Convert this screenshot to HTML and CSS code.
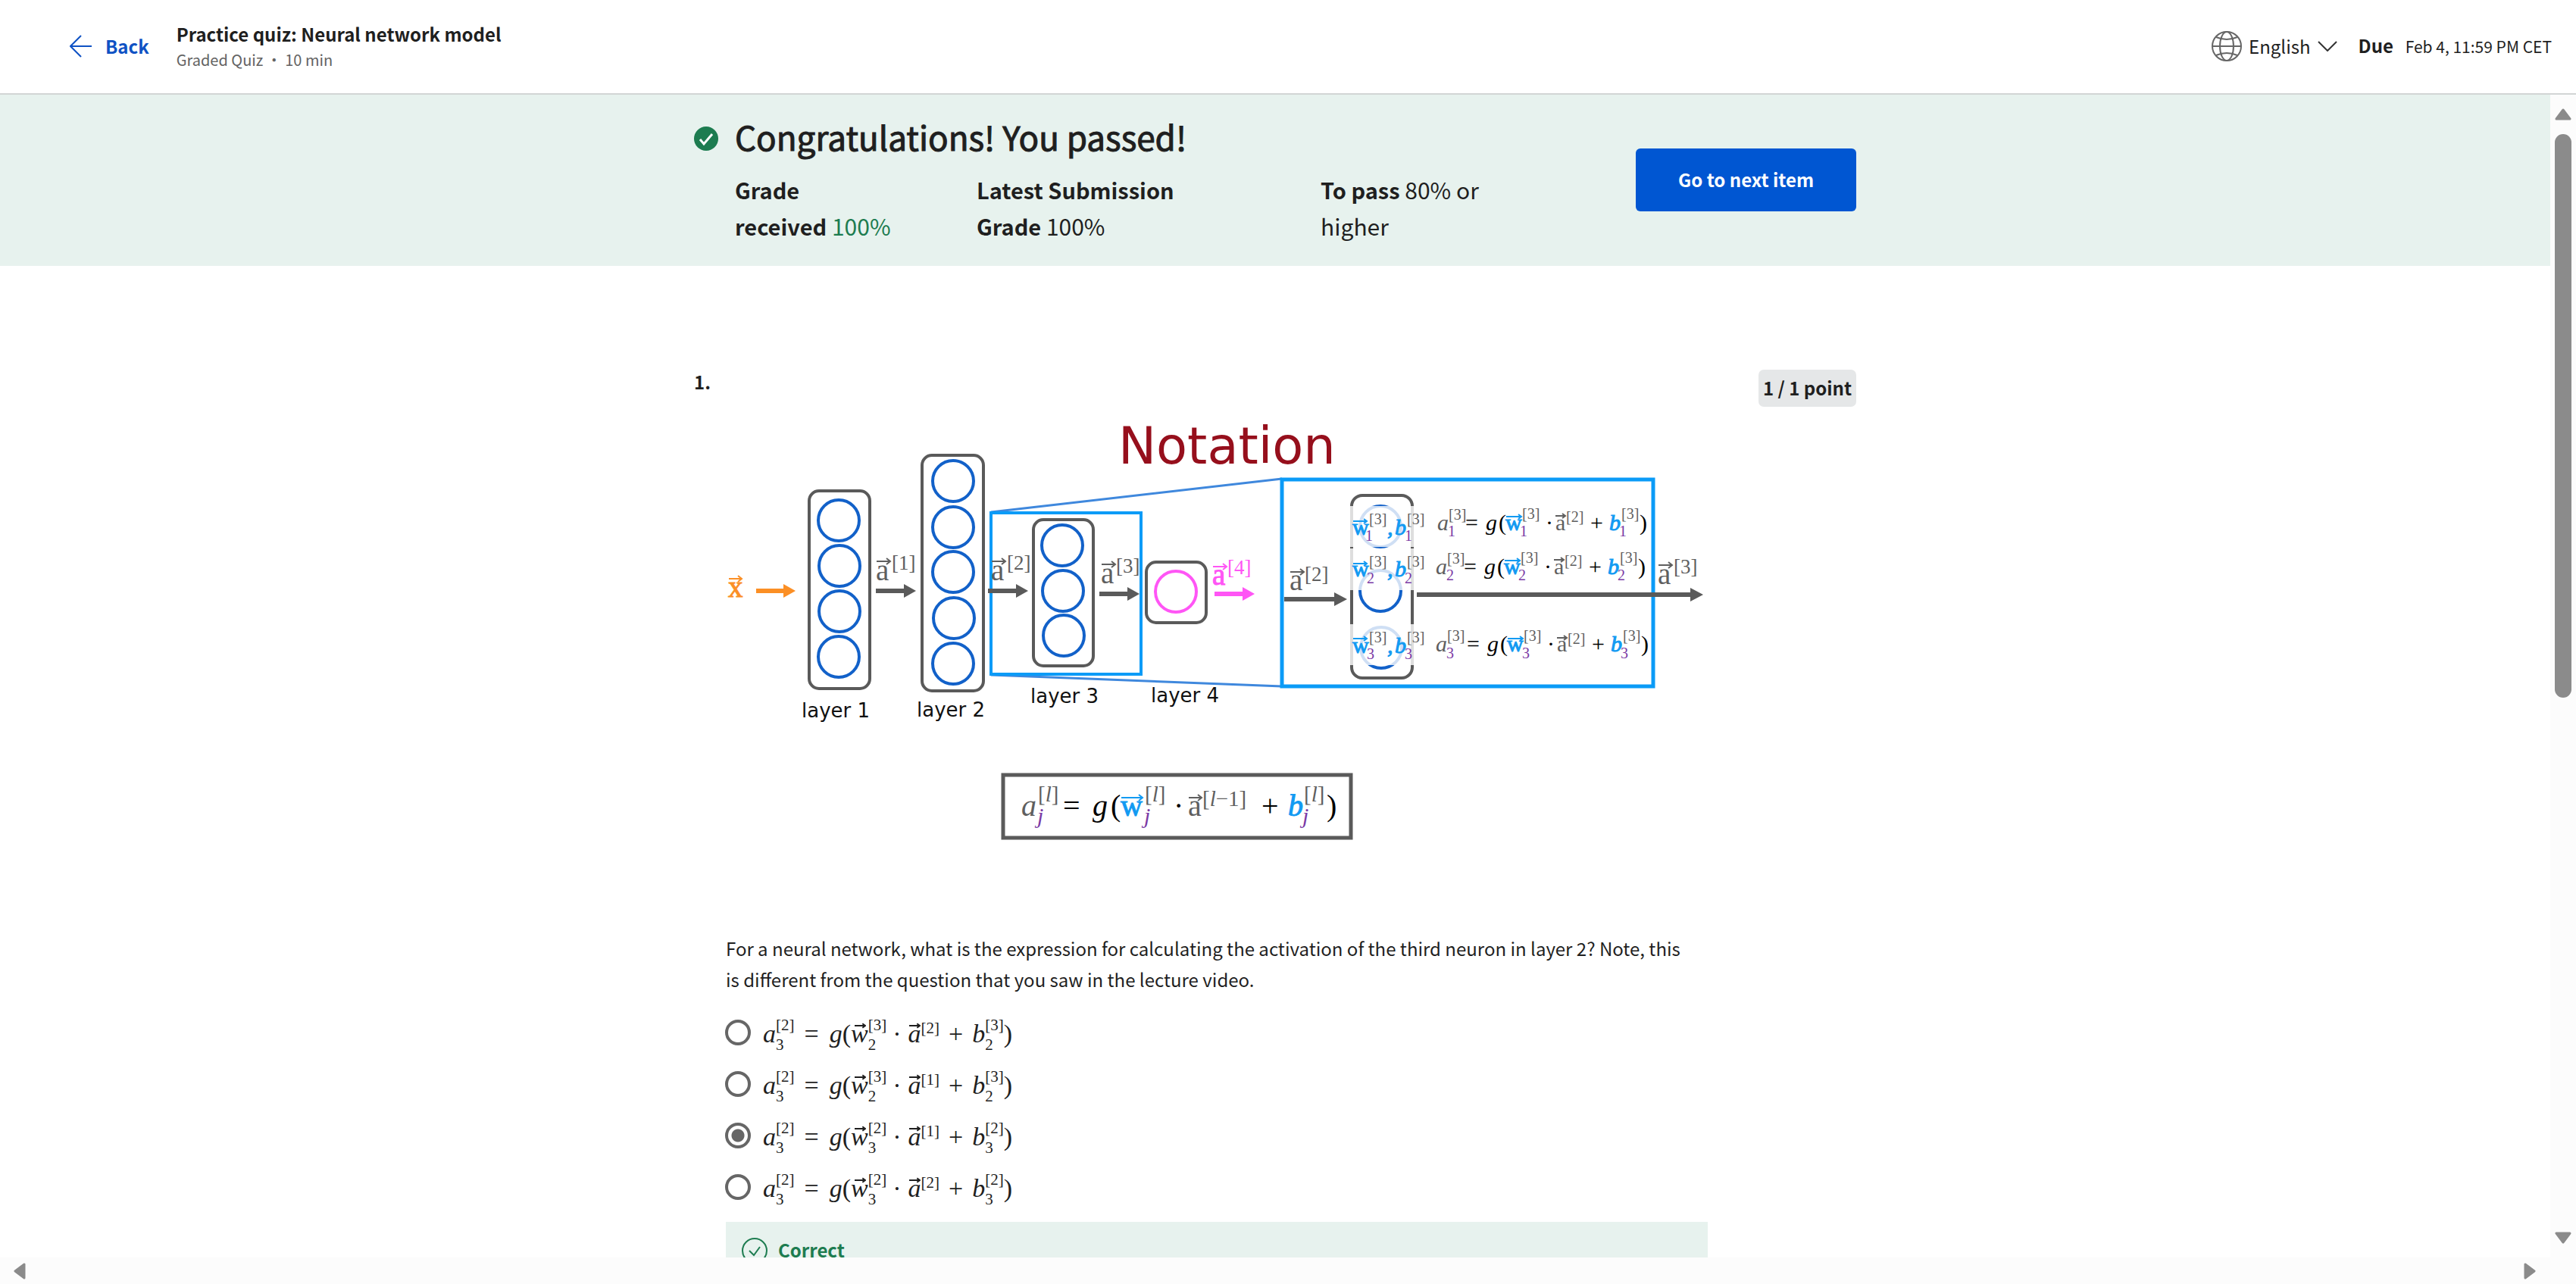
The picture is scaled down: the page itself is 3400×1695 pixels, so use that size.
FILE: index.html
```html
<!DOCTYPE html>
<html lang="en">
<head>
<meta charset="utf-8">
<meta name="viewport" content="width=device-width, initial-scale=1">
<title>Practice quiz: Neural network model</title>
<link rel="stylesheet" href="styles.css">
</head>
<body>
<header class="topbar">
  <a class="back" href="#">
    <svg class="back-icon" viewBox="0 0 30 30" aria-hidden="true"><path d="M15 1 1 15l14 14M1 15h28"/></svg>
    <span>Back</span>
  </a>
  <div class="topbar-title">
    <h1>Practice quiz: Neural network model</h1>
    <p>Graded Quiz • 10 min</p>
  </div>
  <button class="language" type="button">
    <svg class="globe" viewBox="0 0 40 40" aria-hidden="true"><circle cx="20" cy="20" r="19"/><ellipse cx="20" cy="20" rx="9" ry="19"/><path d="M1 20h38M6 8q14 6 28 0M6 32q14-6 28 0"/></svg>
    <span>English</span>
    <svg class="chevron" viewBox="0 0 26 14" aria-hidden="true"><path d="M1 1l12 12L25 1"/></svg>
  </button>
  <p class="due"><strong>Due</strong> <span>Feb 4, 11:59 PM CET</span></p>
</header>

<div class="viewport">
  <main class="page">
    <section class="banner">
      <div class="banner-inner">
        <svg class="passed" viewBox="0 0 32 32" aria-hidden="true"><circle cx="16" cy="16" r="16"/><path d="M8 17l5 6L24 10"/></svg>
        <div class="result">
          <h2>Congratulations! You passed!</h2>
          <ul class="stats">
            <li class="received"><strong>Grade received</strong> <span class="green">100%</span></li>
            <li><strong>Latest Submission Grade</strong> 100%</li>
            <li><strong>To pass</strong> 80% or higher</li>
          </ul>
        </div>
        <button class="next" type="button">Go to next item</button>
      </div>
    </section>

    <section class="question">
      <div class="number">1.</div>
      <div class="question-body">
        <svg class="diagram" viewBox="958 488 1296 743" role="img" aria-label="Neural network notation diagram">
          <text class="d-title" x="1476" y="612">Notation</text>

          <g class="zoom-line"><path d="M1308 676 1692 632M1308 891 1692 906"/></g>

          <g class="layer">
            <rect x="1068" y="648" width="80" height="261" rx="13"/>
            <rect x="1217" y="601" width="81" height="311" rx="13"/>
            <rect x="1364" y="686" width="79" height="193" rx="13"/>
            <rect x="1513" y="742" width="79" height="80" rx="13"/>
            <rect x="1784" y="654" width="80" height="241" rx="14"/>
          </g>
          <g class="neuron">
            <circle cx="1107" cy="687" r="27"/><circle cx="1108" cy="747" r="27"/><circle cx="1108" cy="807" r="27"/><circle cx="1107" cy="867" r="27"/>
            <circle cx="1258" cy="635" r="27"/><circle cx="1258" cy="696" r="27"/><circle cx="1258" cy="755" r="27"/><circle cx="1259" cy="816" r="27"/><circle cx="1258" cy="876" r="27"/>
            <circle cx="1402" cy="720" r="27"/><circle cx="1403" cy="780" r="27"/><circle cx="1404" cy="839" r="27"/>
            <circle cx="1822" cy="695" r="27"/><circle cx="1822" cy="780" r="27"/><circle cx="1823" cy="855" r="27"/>
            <circle class="output" cx="1552" cy="781" r="27"/>
          </g>
          <g class="veil"><rect x="1780" y="668" width="88" height="54"/><rect x="1780" y="724" width="88" height="55"/><rect x="1780" y="824" width="88" height="54"/></g>

          <g class="frame">
            <rect x="1308" y="677" width="198" height="213"/>
            <rect class="thick" x="1692" y="633" width="490" height="273"/>
          </g>

          <path class="orange" d="M998 777h36v-6l16 9-16 9v-6h-36z"/>
          <path class="grey" d="M1156 777h37v-6l16 9-16 9v-6h-37z"/>
          <path class="grey" d="M1304 777h37v-6l16 9-16 9v-6h-37z"/>
          <path class="grey" d="M1451 781h37v-6l16 9-16 9v-6h-37z"/>
          <path class="pink" d="M1603 781h37v-6l16 9-16 9v-6h-37z"/>
          <path class="grey" d="M1695 788h66v-6l17 9-17 9v-6h-66z"/>
          <path class="grey" d="M1870 782h361v-6l17 9-17 9v-6h-361z"/>

          <g class="vector">
            <path class="s-orange" d="M962 764h17m-5-4 5 4-5 4"/>
            <path d="M1157 741h18m-5-4 5 4-5 4M1309 741h18m-5-4 5 4-5 4M1454 745h18m-5-4 5 4-5 4M1703 755h18m-5-4 5 4-5 4M2189 746h18m-5-4 5 4-5 4"/>
            <path class="s-pink" d="M1601 748h18m-5-4 5 4-5 4"/>
            <path class="s-blue" d="M1786 688h18m-4-3 4 3-4 3M1786 744h18m-4-3 4 3-4 3M1786 843h18m-4-3 4 3-4 3"/>
          </g>
          <g class="m-large">
            <text class="orange" x="961" y="788">x</text>
            <text x="1156" y="766">a</text><text x="1308" y="766">a</text><text x="1453" y="770">a</text>
            <text class="pink" x="1600" y="772">a</text><text x="1702" y="779">a</text><text x="2188" y="771">a</text>
          </g>
          <g class="m-index">
            <text x="1177" y="752">[1]</text><text x="1329" y="752">[2]</text><text x="1473" y="756">[3]</text>
            <text class="pink" x="1620" y="758">[4]</text><text x="1722" y="767">[2]</text><text x="2209" y="757">[3]</text>
          </g>

          <g class="d-label">
            <text x="1058" y="947">layer 1</text><text x="1210" y="946">layer 2</text>
            <text x="1360" y="928">layer 3</text><text x="1519" y="927">layer 4</text>
          </g>

          <g class="m-small">
            <text class="blue" x="1785" y="706">w</text><text class="sup" x="1807" y="692">[3]</text><text class="sub" x="1802" y="714">1</text><text class="blue it" x="1831" y="706">,</text><text class="blue it" x="1841" y="706">b</text><text class="sup" x="1857" y="692">[3]</text><text class="sub" x="1854" y="714">1</text>
            <text class="blue" x="1785" y="761">w</text><text class="sup" x="1807" y="748">[3]</text><text class="sub" x="1804" y="770">2</text><text class="blue it" x="1831" y="761">,</text><text class="blue it" x="1841" y="761">b</text><text class="sup" x="1857" y="748">[3]</text><text class="sub" x="1854" y="770">2</text>
            <text class="blue" x="1785" y="862">w</text><text class="sup" x="1807" y="848">[3]</text><text class="sub" x="1804" y="870">3</text><text class="blue it" x="1831" y="862">,</text><text class="blue it" x="1841" y="862">b</text><text class="sup" x="1857" y="848">[3]</text><text class="sub" x="1854" y="870">3</text>
          </g>

          <g class="m-small">
            <text class="it" x="1897" y="700">a</text><text class="sup" x="1912" y="686">[3]</text><text class="sub" x="1911" y="708">1</text><text class="ink" x="1934" y="700">=</text><text class="ink it" x="1961" y="700">g</text><text class="ink" x="1978" y="700">(</text><text class="blue" x="1987" y="700">w</text><text class="sup" x="2009" y="685">[3]</text><text class="sub" x="2006" y="708">1</text><text class="ink" x="2040" y="700">·</text><text x="2053" y="700">a</text><text class="sup" x="2067" y="689">[2]</text><text class="ink" x="2099" y="700">+</text><text class="blue it" x="2124" y="700">b</text><text class="sup" x="2140" y="685">[3]</text><text class="sub" x="2137" y="708">1</text><text class="ink" x="2164" y="700">)</text>
            <path class="s-blue" d="M1988 682h20m-4-3 4 3-4 3"/><path d="M2053 681h13m-4-3 4 3-4 3"/>
          </g>
          <g class="m-small">
            <text class="it" x="1895" y="758">a</text><text class="sup" x="1910" y="744">[3]</text><text class="sub" x="1909" y="766">2</text><text class="ink" x="1932" y="758">=</text><text class="ink it" x="1959" y="758">g</text><text class="ink" x="1976" y="758">(</text><text class="blue" x="1985" y="758">w</text><text class="sup" x="2007" y="743">[3]</text><text class="sub" x="2004" y="766">2</text><text class="ink" x="2038" y="758">·</text><text x="2051" y="758">a</text><text class="sup" x="2065" y="747">[2]</text><text class="ink" x="2097" y="758">+</text><text class="blue it" x="2122" y="758">b</text><text class="sup" x="2138" y="743">[3]</text><text class="sub" x="2135" y="766">2</text><text class="ink" x="2162" y="758">)</text>
            <path class="s-blue" d="M1986 740h20m-4-3 4 3-4 3"/><path d="M2051 739h13m-4-3 4 3-4 3"/>
          </g>
          <g class="m-small">
            <text class="it" x="1895" y="860">a</text><text class="sup" x="1910" y="846">[3]</text><text class="sub" x="1909" y="869">3</text><text class="ink" x="1936" y="860">=</text><text class="ink it" x="1963" y="860">g</text><text class="ink" x="1980" y="860">(</text><text class="blue" x="1989" y="860">w</text><text class="sup" x="2011" y="846">[3]</text><text class="sub" x="2009" y="869">3</text><text class="ink" x="2042" y="860">·</text><text x="2055" y="860">a</text><text class="sup" x="2069" y="850">[2]</text><text class="ink" x="2101" y="860">+</text><text class="blue it" x="2126" y="860">b</text><text class="sup" x="2142" y="846">[3]</text><text class="sub" x="2139" y="869">3</text><text class="ink" x="2166" y="860">)</text>
            <path class="s-blue" d="M1990 843h20m-4-3 4 3-4 3"/><path d="M2055 842h13m-4-3 4 3-4 3"/>
          </g>

          <rect class="formula-box" x="1324" y="1023" width="459" height="83"/>
          <g class="m-formula">
            <text class="it" x="1348" y="1077">a</text><text class="sup" x="1370" y="1058">[<tspan class="it">l</tspan>]</text><text class="sub it" x="1369" y="1087">j</text>
            <text class="ink" x="1403" y="1077">=</text><text class="ink it" x="1442" y="1077">g</text><text class="ink" x="1466" y="1077">(</text>
            <text class="blue" x="1479" y="1077">w</text><text class="sup" x="1511" y="1058">[<tspan class="it">l</tspan>]</text><text class="sub it" x="1510" y="1087">j</text>
            <text class="ink" x="1549" y="1077">·</text><text x="1568" y="1077">a</text><text class="sup" x="1587" y="1064">[<tspan class="it">l</tspan>−1]</text>
            <text class="ink" x="1665" y="1077">+</text><text class="blue it" x="1700" y="1077">b</text><text class="sup" x="1721" y="1058">[<tspan class="it">l</tspan>]</text><text class="sub it" x="1719" y="1087">j</text><text class="ink" x="1751" y="1077">)</text>
            <path class="s-blue" d="M1480 1053h28m-5-4 5 4-5 4"/><path d="M1569 1053h17m-5-4 5 4-5 4"/>
          </g>
        </svg>

        <fieldset class="answers">
          <legend>For a neural network, what is the expression for calculating the activation of the third neuron in layer 2? Note, this is different from the question that you saw in the lecture video.</legend>
          <label class="option"><input type="radio" name="q1">
            <span class="math"><i>a</i><span class="ss">[2]<br>3</span><span class="rel">=</span><i>g</i>(<span class="vec wide"><i>w</i><svg viewBox="0 0 16 8" aria-hidden="true"><path d="M0 4h15M11 1l4 3-4 3"/></svg></span><span class="ss">[3]<br>2</span><span class="dot">·</span><span class="vec"><i>a</i><svg viewBox="0 0 16 8" aria-hidden="true"><path d="M0 4h15M11 1l4 3-4 3"/></svg></span><span class="up">[2]</span><span class="plus">+</span><i>b</i><span class="ss">[3]<br>2</span>)</span></label>
          <label class="option"><input type="radio" name="q1">
            <span class="math"><i>a</i><span class="ss">[2]<br>3</span><span class="rel">=</span><i>g</i>(<span class="vec wide"><i>w</i><svg viewBox="0 0 16 8" aria-hidden="true"><path d="M0 4h15M11 1l4 3-4 3"/></svg></span><span class="ss">[3]<br>2</span><span class="dot">·</span><span class="vec"><i>a</i><svg viewBox="0 0 16 8" aria-hidden="true"><path d="M0 4h15M11 1l4 3-4 3"/></svg></span><span class="up">[1]</span><span class="plus">+</span><i>b</i><span class="ss">[3]<br>2</span>)</span></label>
          <label class="option"><input type="radio" name="q1" checked>
            <span class="math"><i>a</i><span class="ss">[2]<br>3</span><span class="rel">=</span><i>g</i>(<span class="vec wide"><i>w</i><svg viewBox="0 0 16 8" aria-hidden="true"><path d="M0 4h15M11 1l4 3-4 3"/></svg></span><span class="ss">[2]<br>3</span><span class="dot">·</span><span class="vec"><i>a</i><svg viewBox="0 0 16 8" aria-hidden="true"><path d="M0 4h15M11 1l4 3-4 3"/></svg></span><span class="up">[1]</span><span class="plus">+</span><i>b</i><span class="ss">[2]<br>3</span>)</span></label>
          <label class="option"><input type="radio" name="q1">
            <span class="math"><i>a</i><span class="ss">[2]<br>3</span><span class="rel">=</span><i>g</i>(<span class="vec wide"><i>w</i><svg viewBox="0 0 16 8" aria-hidden="true"><path d="M0 4h15M11 1l4 3-4 3"/></svg></span><span class="ss">[2]<br>3</span><span class="dot">·</span><span class="vec"><i>a</i><svg viewBox="0 0 16 8" aria-hidden="true"><path d="M0 4h15M11 1l4 3-4 3"/></svg></span><span class="up">[2]</span><span class="plus">+</span><i>b</i><span class="ss">[2]<br>3</span>)</span></label>
        </fieldset>

        <div class="feedback">
          <svg viewBox="0 0 34 34" aria-hidden="true"><circle cx="17" cy="17" r="16"/><path d="M10 17l6 6 8-11"/></svg>
          <strong>Correct</strong>
        </div>
      </div>
      <div class="points">1 / 1 point</div>
    </section>
  </main>

  <div class="vbar" aria-hidden="true">
    <svg viewBox="0 0 22 16"><path d="M11 2 20 14H2z"/></svg>
    <div class="track"><div class="thumb"></div></div>
    <svg viewBox="0 0 22 16"><path d="M2 2h18L11 14z"/></svg>
  </div>
  <div class="hbar" aria-hidden="true">
    <svg viewBox="0 0 16 22"><path d="M14 2v18L2 11z"/></svg>
    <svg viewBox="0 0 16 22"><path d="M2 2v18l12-9z"/></svg>
  </div>
</div>
</body>
</html>
```

FILE: styles.css
```css
* { box-sizing: border-box; }

body {
  margin: 0;
  height: 100vh;
  display: flex;
  flex-direction: column;
  overflow: hidden;
  background: #fff;
  color: #1f1f1f;
  font-family: "Noto Sans CJK SC", "Noto Sans", sans-serif;
  font-size: 24px;
  line-height: 32px;
}

h1, h2, p, ul { margin: 0; padding: 0; }
button { font: inherit; color: inherit; border: 0; background: none; padding: 0; cursor: pointer; }

/* Top bar */
.topbar {
  flex: none;
  height: 125px;
  display: flex;
  align-items: center;
  padding: 0 32px 2px 92px;
  border-bottom: 2px solid #d2d5d5;
}
.back {
  display: flex;
  align-items: center;
  gap: 17px;
  margin-right: 36px;
  color: #0f52c4;
  font-weight: 700;
  text-decoration: none;
}
.back-icon { width: 30px; height: 30px; fill: none; stroke: currentColor; stroke-width: 2; }
.topbar-title { flex: 1; }
.topbar-title h1 { font-size: 24px; line-height: 36px; }
.topbar-title p { font-size: 20px; line-height: 32px; color: #636363; }
.language { display: flex; align-items: center; gap: 9px; margin-right: 28px; }
.globe { width: 40px; height: 40px; fill: none; stroke: #666; stroke-width: 2; }
.chevron { width: 26px; height: 14px; fill: none; stroke: #333; stroke-width: 2; }
.due { font-size: 21px; }
.due strong { font-size: 24px; margin-right: 11px; }

/* Scrolling region and its bars */
.viewport {
  flex: 1;
  min-height: 0;
  display: grid;
  grid-template: minmax(0, 1fr) 35px / minmax(0, 1fr) 34px;
}
.page { overflow: hidden; }
.vbar {
  display: flex;
  flex-direction: column;
  align-items: center;
  gap: 18px;
  padding: 18px 0;
  background: #fcfcfc;
}
.vbar svg { flex: none; width: 22px; height: 16px; }
.hbar {
  grid-column: 1 / -1;
  display: flex;
  align-items: center;
  justify-content: space-between;
  padding: 0 53px 0 18px;
  background: #fcfcfc;
}
.hbar svg { width: 16px; height: 22px; }
.vbar path, .hbar path { fill: #8b8b8b; stroke: #8b8b8b; stroke-width: 3; stroke-linejoin: round; }
.track { flex: 1; width: 22px; }
.thumb { height: 52%; border-radius: 11px; background: #8b8b8b; }

/* Result banner */
.banner { background: #e7f2ee; padding: 25px 32px 29px; }
.banner-inner {
  display: flex;
  max-width: 1534px;
  margin: 0 auto;
}
.passed { flex: none; width: 32px; height: 32px; margin: 17px 22px 0 0; }
.passed circle { fill: #1d7c50; }
.passed path { fill: none; stroke: #fff; stroke-width: 3; }
.result { flex: 1; }
.result h2 { font-size: 44px; font-weight: 400; line-height: 60px; margin-bottom: 16px; -webkit-text-stroke: 1px currentColor; }
.stats {
  display: grid;
  grid-template-columns: 219px 354px 240px;
  column-gap: 100px;
  list-style: none;
  font-size: 30px;
  line-height: 48px;
}
.stats li { max-width: 320px; }
.stats .received { max-width: 210px; }
.stats strong { font-size: 29px; }
.green { color: #1d7c50; }
.next {
  align-self: center;
  width: 291px;
  height: 83px;
  margin-top: 2px;
  border-radius: 6px;
  background: #0056d2;
  color: #fff;
  font-weight: 700;
}

/* Question */
.question {
  display: grid;
  grid-template-columns: 42px minmax(0, 1fr) 129px;
  max-width: 1534px;
  margin: 137px auto 0;
}
.number { font-weight: 700; }
.question-body { margin-right: 67px; }
.points {
  align-self: start;
  height: 49px;
  border-radius: 7px;
  background: #e5e7e8;
  font-weight: 700;
  line-height: 47px;
  text-align: center;
}

/* Diagram */
.diagram { display: block; width: 100%; height: auto; font-family: "Liberation Serif", serif; }
.d-title { font-family: "DejaVu Sans", sans-serif; font-size: 67px; fill: #960f1c; }
.d-label { font-family: "DejaVu Sans", sans-serif; font-size: 26px; fill: #111; }
.layer rect { fill: #fff; stroke: #5a5a5a; stroke-width: 4; }
.neuron circle { fill: none; stroke: #1261c9; stroke-width: 4; }
.neuron .output { stroke: #ff55f5; }
.veil rect { fill: #fff; opacity: .8; }
.frame rect { fill: none; stroke: #0b9bf7; stroke-width: 4; }
.frame .thick { stroke-width: 5; }
.zoom-line { fill: none; stroke: #3f88dd; stroke-width: 3; }
.formula-box { fill: none; stroke: #5a5a5a; stroke-width: 5; }
.vector path, .m-small path, .m-formula path { fill: none; stroke: #5f5f5f; stroke-width: 2; }
.diagram .s-orange { stroke: #fb8f25; }
.diagram .s-pink { stroke: #ff55f5; }
.diagram .s-blue { stroke: #129af2; }
.m-large { font-size: 39px; fill: #5f5f5f; }
.m-index { font-size: 27px; fill: #5f5f5f; }
.m-small { font-size: 30px; fill: #5f5f5f; }
.m-small .sup, .m-small .sub { font-size: 20px; }
.m-formula { font-size: 40px; fill: #5f5f5f; }
.m-formula .sup { font-size: 29px; }
.m-formula .sub { font-size: 30px; }
.it { font-style: italic; }
.orange { fill: #fb8f25; }
.m-large .orange { stroke: #fb8f25; }
.grey { fill: #5a5a5a; }
.pink { fill: #ff55f5; }
.m-large .pink { stroke: #ff55f5; }
.blue { fill: #129af2; stroke: #129af2; }
.ink { fill: #000; }
.sub { fill: #7b3aa5; }

/* Answers */
.answers { margin: 0; padding: 0; border: 0; min-width: 0; }
.answers legend { padding: 0 24px 0 0; margin-bottom: 16px; line-height: 41px; }
.option { display: flex; align-items: center; height: 68px; gap: 16px; cursor: pointer; }
.option input {
  appearance: none;
  flex: none;
  width: 34px;
  height: 34px;
  margin: 0 0 0 -1px;
  border: 4px solid #666;
  border-radius: 50%;
}
.option input:checked { background: radial-gradient(circle, #666 8px, transparent 9px); }
.math { padding-top: 4px; font-family: "Liberation Serif", serif; font-size: 34px; line-height: 60px; white-space: nowrap; }
.ss { display: inline-block; font-size: 21px; line-height: 26px; vertical-align: -10px; }
.up { display: inline-block; font-size: 21px; line-height: 26px; vertical-align: 12px; }
.rel { margin: 0 14px 0 13px; }
.dot { margin: 0 9px 0 8px; }
.plus { margin: 0 12px; }
.vec { display: inline-block; position: relative; line-height: 34px; }
.vec svg { position: absolute; left: 1px; top: 2px; width: 15px; height: 8px; fill: none; stroke: currentColor; stroke-width: 2; }
.vec.wide svg { left: 5px; }

/* Feedback */
.feedback {
  display: flex;
  gap: 14px;
  margin-top: 12px;
  padding: 21px 21px 24px;
  background: #e7f2ee;
  color: #1d7c50;
}
.feedback svg { width: 34px; height: 34px; fill: none; stroke: currentColor; stroke-width: 2; }
```
